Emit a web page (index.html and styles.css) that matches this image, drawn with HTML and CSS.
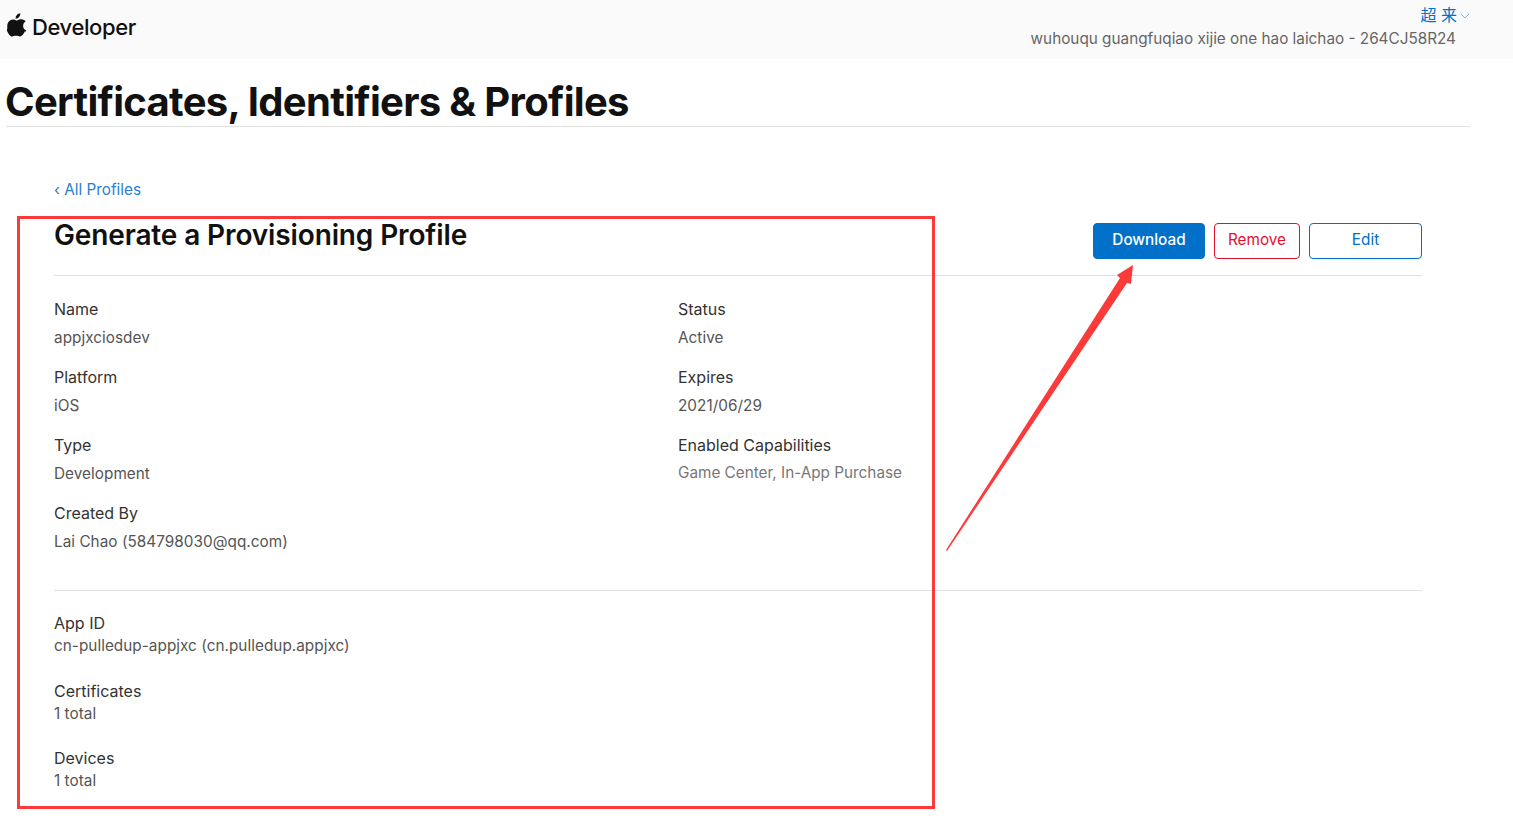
FILE: index.html
```html
<!DOCTYPE html>
<html lang="en">
<head>
<meta charset="utf-8">
<title>Certificates, Identifiers &amp; Profiles</title>
<link rel="stylesheet" href="styles.css">
</head>
<body>
<header class="topbar">
  <div class="brand">
    <svg class="apple" viewBox="0 0 170 200" aria-hidden="true"><path d="M150.4 155.8c-2.9 6.7-6.3 12.800-10.300 18.500-5.400 7.700-9.900 13.100-13.300 16-5.300 4.900-11 7.400-17.100 7.500-4.400 0-9.700-1.200-15.800-3.700-6.200-2.500-11.800-3.700-17-3.700-5.400 0-11.200 1.200-17.400 3.700-6.200 2.500-11.200 3.800-15 4-5.800.2-11.600-2.300-17.400-7.700-3.700-3.200-8.300-8.800-13.900-16.700-5.900-8.400-10.800-18.100-14.600-29.200C4 132.500 2 121 2 109.800c0-12.800 2.800-23.900 8.300-33.200 4.400-7.400 10.200-13.300 17.500-17.600 7.300-4.300 15.100-6.500 23.600-6.700 4.600 0 10.700 1.400 18.300 4.300 7.500 2.800 12.400 4.300 14.500 4.300 1.600 0 7-1.700 16.100-5 8.600-3.100 15.900-4.400 21.900-3.900 16.200 1.300 28.400 7.700 36.500 19.200-14.500 8.800-21.700 21.100-21.500 36.900.1 12.300 4.600 22.500 13.400 30.600 4 3.800 8.500 6.700 13.400 8.800-1.100 3.100-2.200 6-3.400 8.800zM113.200 4.300c0 9.600-3.500 18.600-10.500 26.900-8.500 9.900-18.700 15.600-29.800 14.700-.1-1.200-.2-2.400-.2-3.700 0-9.200 4-19.100 11.100-27.100 3.500-4.100 8-7.500 13.500-10.200C102.700 2.200 107.900.7 112.800.5c.2 1.300.3 2.600.3 3.800z"/></svg>
    <span class="brand-name">Developer</span>
  </div>
  <div class="account">
    <div class="user">超 来<svg class="chev" viewBox="0 0 10 6" aria-hidden="true"><path d="M1 1l4 4 4-4"/></svg></div>
    <div class="team">wuhouqu guangfuqiao xijie one hao laichao - 264CJ58R24</div>
  </div>
</header>

<h1 class="page-title">Certificates, Identifiers &amp; Profiles</h1>

<main class="content">
  <a class="back" href="#">‹ All Profiles</a>
  <div class="head">
    <h2>Generate a Provisioning Profile</h2>
    <div class="actions">
      <a class="btn primary" href="#">Download</a>
      <a class="btn danger" href="#">Remove</a>
      <a class="btn outline" href="#">Edit</a>
    </div>
  </div>

  <section class="details">
    <div class="col">
      <dl><dt>Name</dt><dd>appjxciosdev</dd></dl>
      <dl><dt>Platform</dt><dd>iOS</dd></dl>
      <dl><dt>Type</dt><dd>Development</dd></dl>
      <dl><dt>Created By</dt><dd>Lai Chao (584798030@qq.com)</dd></dl>
    </div>
    <div class="col">
      <dl><dt>Status</dt><dd>Active</dd></dl>
      <dl><dt>Expires</dt><dd>2021/06/29</dd></dl>
      <dl><dt>Enabled Capabilities</dt><dd class="muted">Game Center, In-App Purchase</dd></dl>
    </div>
  </section>

  <section class="related">
    <dl><dt>App ID</dt><dd>cn-pulledup-appjxc (cn.pulledup.appjxc)</dd></dl>
    <dl><dt>Certificates</dt><dd>1 total</dd></dl>
    <dl><dt>Devices</dt><dd>1 total</dd></dl>
  </section>
</main>

<div class="mark-box"></div>
<svg class="mark-arrow" viewBox="0 0 200 300" aria-hidden="true"><path d="M187 1L171 11L174 14L0 286L1 287L181 19L185 20Z"/></svg>
</body>
</html>
```

FILE: styles.css
```css
* { box-sizing: border-box; }
html, body { margin: 0; padding: 0; }
body {
  position: relative;
  height: 821px;
  overflow: hidden;
  background: #fff;
  color: #333;
  font-family: Inter, "Noto Sans CJK SC", "Liberation Sans", sans-serif;
  font-size: 15.300px;
}
.topbar {
  height: 59px;
  background: #fafafa;
  display: flex;
  justify-content: space-between;
  padding: 0 43px 0 7px;
}
.brand { display: flex; align-items: center; height: 54px; }
.apple { width: 20px; height: 24px; fill: #111; margin-top: -4px; }
.brand-name { margin-left: 5px; font-size: 22px; font-weight: 500; color: #111; letter-spacing: -0.4px; }
.account { display: flex; flex-direction: column; align-items: flex-end; }
.user { height: 29px; line-height: 30px; color: #0070c9; font-size: 16px; display: flex; align-items: center; }
.chev { width: 10px; height: 6px; margin-left: 3px; margin-top: 2px; fill: none; stroke: #7fb5e0; stroke-width: 1; }
.team { margin-right: 14px; font-size: 15.300px; line-height: 20px; color: #666; }
.page-title {
  margin: 0 43px 0 6px;
  height: 68px;
  padding-top: 19px;
  font-size: 40px;
  line-height: 48px;
  font-weight: 700;
  letter-spacing: -0.68px;
  text-indent: -1px;
  color: #111;
  border-bottom: 1px solid #e0e0e0;
}
.content { padding: 53px 91px 0 54px; }
.back { display: block; height: 20px; line-height: 20px; color: #2a7fd0; text-decoration: none; font-size: 15.300px; }
.head {
  display: flex;
  justify-content: space-between;
  height: 56px;
  margin-top: 20px;
  border-bottom: 1px solid #e0e0e0;
}
.head h2 { margin: 0; font-size: 28px; line-height: 30px; font-weight: 600; color: #111; letter-spacing: -0.13px; }
.actions { display: flex; gap: 9px; margin-top: 3px; height: 36px; }
.btn {
  height: 36px;
  line-height: 32px;
  text-align: center;
  border-radius: 4px;
  border: 1px solid;
  text-decoration: none;
  font-size: 15.300px;
}
.primary { width: 112px; background: #0070c9; border-color: #0070c9; color: #fff; font-weight: 500; }
.danger { width: 86px; border-color: #e30f2d; color: #e30f2d; }
.outline { width: 113px; border-color: #0070c9; color: #0070c9; }
.details {
  display: grid;
  grid-template-columns: 624px 1fr;
  height: 315px;
  padding-top: 20px;
  border-bottom: 1px solid #e0e0e0;
}
dl { margin: 0; }
dt { font-size: 16px; line-height: 26px; margin-bottom: 2px; color: #333; }
dd { margin: 0; line-height: 28px; color: #555; letter-spacing: 0.04px; }
.col dl { height: 68px; }
.col dd.muted { color: #777; margin-top: -1px; letter-spacing: 0; }
.related { padding-top: 22px; }
.related dl { height: 67.500px; }
.related dt { line-height: 20px; }
.related dd { line-height: 22px; }
.mark-box {
  position: absolute;
  left: 17px;
  top: 216px;
  width: 918px;
  height: 593px;
  border: 3px solid #fd3a3a;
}
.mark-arrow {
  position: absolute;
  left: 946px;
  top: 264px;
  width: 200px;
  height: 300px;
  fill: #fd3a3a;
}
```
